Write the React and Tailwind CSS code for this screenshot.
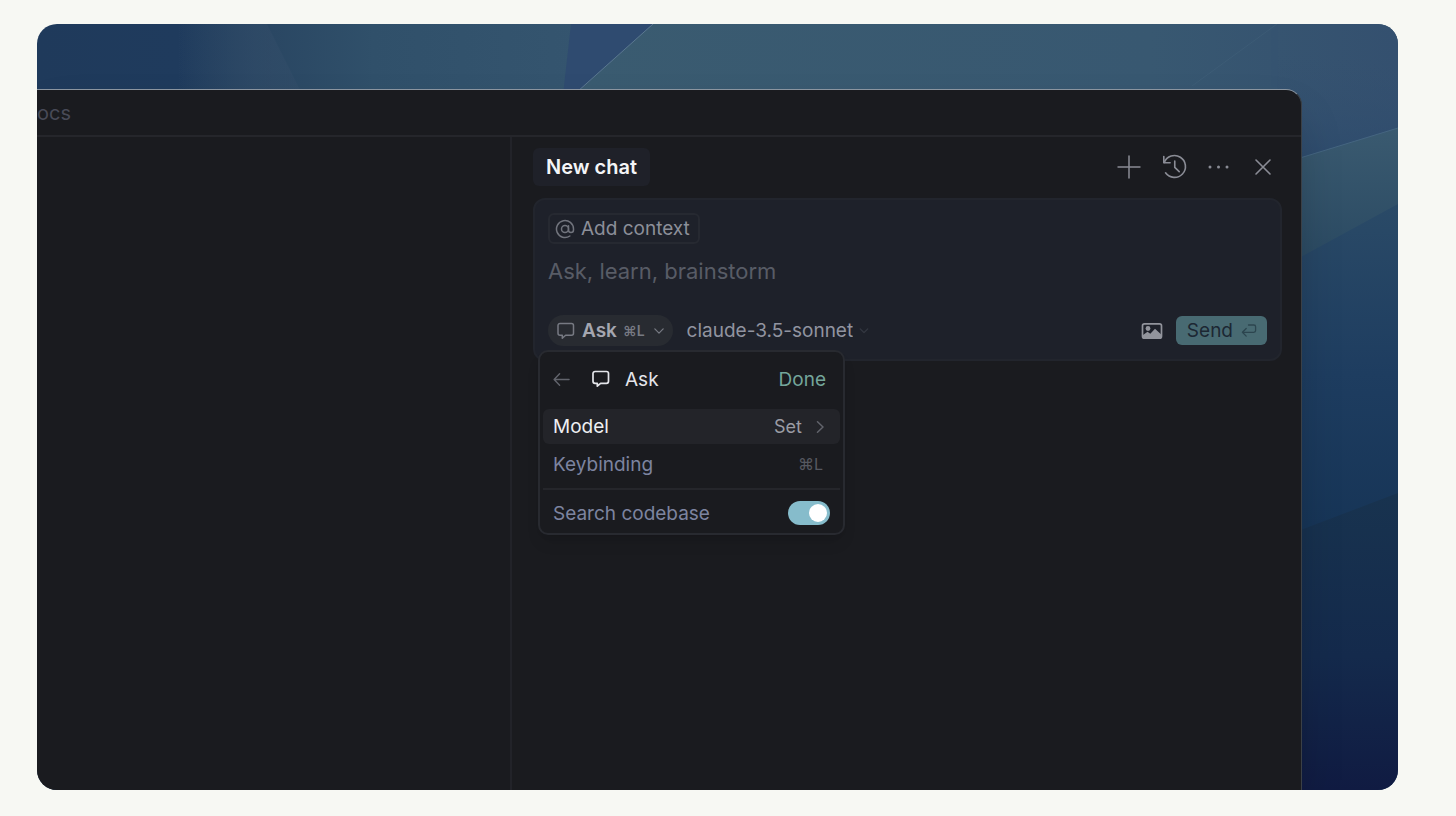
import React, { useState } from "react";

function Wallpaper() {
  return (
    <svg
      className="absolute inset-0 h-full w-full"
      viewBox="0 0 1361 766"
      preserveAspectRatio="none"
      aria-hidden="true"
    >
      <defs>
        <linearGradient id="sky" gradientUnits="userSpaceOnUse" x1="0" y1="0" x2="560" y2="0">
          <stop offset="0" stopColor="#1f3a5b" />
          <stop offset="0.25" stopColor="#1f3b5d" />
          <stop offset="0.42" stopColor="#2a4763" />
          <stop offset="0.6" stopColor="#30506a" />
          <stop offset="1" stopColor="#35556f" />
        </linearGradient>
        <linearGradient id="beam" gradientUnits="userSpaceOnUse" x1="140" y1="0" x2="250" y2="0">
          <stop offset="0" stopColor="#344e6a" stopOpacity="0" />
          <stop offset="0.7" stopColor="#344e6a" stopOpacity="0.45" />
          <stop offset="1" stopColor="#344e6a" stopOpacity="0.45" />
        </linearGradient>
        <linearGradient id="ridge" x1="0" y1="0" x2="1" y2="0">
          <stop offset="0" stopColor="#3a5b70" />
          <stop offset="0.7" stopColor="#385871" />
          <stop offset="1" stopColor="#34506f" />
        </linearGradient>
        <linearGradient id="dusk" x1="0" y1="0" x2="0" y2="1">
          <stop offset="0" stopColor="#34506f" stopOpacity="0" />
          <stop offset="1" stopColor="#2c4a6c" />
        </linearGradient>
        <linearGradient id="teal" x1="0" y1="0" x2="0" y2="1">
          <stop offset="0" stopColor="#3a5a70" />
          <stop offset="1" stopColor="#27465f" />
        </linearGradient>
        <linearGradient id="blue" x1="0" y1="0" x2="0" y2="1">
          <stop offset="0" stopColor="#2a4a67" />
          <stop offset="0.5" stopColor="#1e3d60" />
          <stop offset="1" stopColor="#163456" />
        </linearGradient>
        <linearGradient id="night" x1="0" y1="0" x2="0" y2="1">
          <stop offset="0" stopColor="#18334f" />
          <stop offset="0.55" stopColor="#142a4c" />
          <stop offset="1" stopColor="#101b42" />
        </linearGradient>
      </defs>
      <rect width="1361" height="766" fill="url(#sky)" />
      <path d="M140 0V80H270L230 0Z" fill="url(#beam)" />
      <path d="M534 0L525 80H540L616 0Z" fill="#2f4b70" />
      <path d="M616 0L536 72V150H1361V0Z" fill="url(#ridge)" />
      <path d="M616 0L540 68" stroke="#5b7890" strokeWidth="1" />
      <path d="M1155 62L1240 0" stroke="#46657e" strokeWidth="1" opacity="0.4" />
      <path d="M1240 30H1361V150H1240Z" fill="url(#dusk)" />
      <path d="M1240 141L1361 104V240L1240 270Z" fill="url(#teal)" />
      <path d="M1240 141L1361 104" stroke="#456580" strokeWidth="1" />
      <path d="M1240 246L1361 180V500L1240 520Z" fill="url(#blue)" />
      <path d="M1240 515L1361 469V766H1240Z" fill="url(#night)" />
    </svg>
  );
}

function Icon({ className, children, viewBox = "0 0 24 24", strokeWidth = 1.5 }) {
  return (
    <svg
      className={className}
      viewBox={viewBox}
      fill="none"
      stroke="currentColor"
      strokeWidth={strokeWidth}
      strokeLinecap="round"
      strokeLinejoin="round"
      aria-hidden="true"
    >
      {children}
    </svg>
  );
}

function ChatIcon({ className, strokeWidth }) {
  return (
    <Icon className={className} viewBox="0 0 20 20" strokeWidth={strokeWidth}>
      <path d="M4 2.500h11.500a2 2 0 0 1 2 2v7.800a2 2 0 0 1-2 2H9.600L6.300 17.200V14.300H4a2 2 0 0 1-2-2V4.500a2 2 0 0 1 2-2Z" />
    </Icon>
  );
}

function PanelHeader() {
  return (
    <header className="flex items-center justify-between pr-[5px]">
      <button className="rounded-md bg-[#1f2129] px-[13px] py-1 text-xl leading-[30px] font-semibold text-[#f4f5f7]">
        New chat
      </button>
      <div className="flex items-center gap-[18px] text-[#8a8c95]">
        <button aria-label="New chat">
          <Icon className="size-7">
            <path d="M12 2.600v18.800M2.600 12h18.800" strokeWidth="1.300" />
          </Icon>
        </button>
        <button aria-label="History">
          <Icon className="size-7" strokeWidth={1.4}>
            <path d="M2.400 3V8.400H7.800" />
            <path d="M2.800 8.100A9.400 9.400 0 1 1 3.900 17" />
            <path d="M11.800 7v5.400l3.800 3.600" />
          </Icon>
        </button>
        <button aria-label="More">
          <Icon className="size-6">
            <g fill="currentColor" stroke="none">
              <circle cx="3" cy="12" r="1.500" />
              <circle cx="11.500" cy="12" r="1.500" />
              <circle cx="20" cy="12" r="1.500" />
            </g>
          </Icon>
        </button>
        <button aria-label="Close">
          <Icon className="size-7" strokeWidth={1.4}>
            <path d="M6 6l12 12M18 6L6 18" />
          </Icon>
        </button>
      </div>
    </header>
  );
}

function ModeMenu() {
  const [search, setSearch] = useState(true);

  return (
    <div className="absolute top-full -left-[10px] z-10 mt-1 w-[307px] rounded-[10px] border-2 border-[#282a30] bg-[#1a1b1f] px-[3px] pt-[3px] text-[19px] leading-[29px] shadow-lg">
      <div className="flex h-12 items-center pr-[14px] pl-[10px] text-[#e4e5ea]">
        <button aria-label="Back" className="mr-[21px] text-[#62646c]">
          <Icon className="size-[17px]" viewBox="0 0 18 18">
            <path d="M17 9H1.500M7 3L1.200 9l5.800 6" />
          </Icon>
        </button>
        <ChatIcon className="mr-[14px] size-5" strokeWidth={1.700} />
        <span>Ask</span>
        <button className="ml-auto text-[#74a69b]">Done</button>
      </div>
      <button className="mt-[6px] flex h-[35px] w-full items-center rounded-md bg-[#232429] pr-[14px] pl-[10px] text-[#eeeff2]">
        <span>Model</span>
        <span className="ml-auto text-lg text-[#9b9ca4]">Set</span>
        <Icon className="ml-3 size-3 text-[#62646c]" viewBox="0 0 12 12">
          <path d="M3.500 0.800L9 6l-5.500 5.200" />
        </Icon>
      </button>
      <button className="flex h-10 w-full items-center justify-between pr-[17px] pl-[10px] text-[#7d84a0]">
        <span>Keybinding</span>
        <kbd className="font-['Inter',sans-serif] text-base text-[#565860]">⌘L</kbd>
      </button>
      <label className="mt-1 flex h-[45px] items-center justify-between border-t-2 border-[#25262b] px-[10px] pt-[3px] text-[#7d84a0]">
        <span>Search codebase</span>
        <input
          type="checkbox"
          role="switch"
          checked={search}
          onChange={(e) => setSearch(e.target.checked)}
          className="h-6 w-[42px] appearance-none rounded-full bg-[#3a3c44] before:m-[3px] before:block before:size-[18px] before:rounded-full before:bg-white checked:bg-[#86bccb] checked:before:ml-[21px]"
        />
      </label>
    </div>
  );
}

function Composer() {
  const [open, setOpen] = useState(true);

  return (
    <form
      className="mt-3 rounded-xl border-2 border-[#22252d] bg-[#1e212a] p-[13px]"
      onSubmit={(e) => e.preventDefault()}
    >
      <button
        type="button"
        className="flex h-[31px] items-center gap-[6px] rounded-md border-2 border-[#262931] pr-2 pl-[5px] text-[19px] leading-[29px] text-[#8c8f99]"
      >
        <Icon className="size-5 text-[#71747d]" strokeWidth={1.8}>
          <circle cx="12" cy="12" r="4.200" />
          <path d="M16.200 8v5.300a3 3 0 0 0 6 0V12a10.200 10.200 0 1 0-4.400 8.400" />
        </Icon>
        Add context
      </button>
      <input
        aria-label="Message"
        placeholder="Ask, learn, brainstorm"
        className="mt-3 block h-[30px] w-full bg-transparent text-[22px] outline-none placeholder:text-[#585c66]"
      />
      <div className="mt-[29px] flex h-[31px] items-center text-[19px] leading-[29px]">
        <div className="relative">
          <button
            type="button"
            aria-expanded={open}
            onClick={() => setOpen(!open)}
            className="flex h-[31px] items-center rounded-full bg-[#282b31] pr-[9px] pl-2 text-[#a4a6b0]"
          >
            <ChatIcon className="size-5 text-[#777a83]" strokeWidth={1.500} />
            <span className="ml-[6px] font-semibold">Ask</span>
            <kbd className="ml-[6px] font-['Inter',sans-serif] text-sm font-semibold text-[#777a83]">⌘L</kbd>
            <Icon className="ml-[9px] size-[10px] text-[#777a83]" viewBox="0 0 12 12">
              <path d="M1 3.500L6 8.500l5-5" />
            </Icon>
          </button>
          {open && <ModeMenu />}
        </div>
        <label className="ml-[14px] flex items-center text-[#9194a0]">
          <select aria-label="Model" className="appearance-none bg-transparent outline-none [field-sizing:content]">
            <option>claude-3.5-sonnet</option>
          </select>
          <Icon className="ml-[6px] size-[10px] text-[#343842]" viewBox="0 0 12 12">
            <path d="M1.500 3.500L6 8l4.500-4.500" />
          </Icon>
        </label>
        <button type="button" aria-label="Attach image" className="ml-auto text-[#92949c]">
          <svg className="size-[22px]" viewBox="0 0 22 22" fill="none" aria-hidden="true">
            <rect x="1.500" y="3.800" width="19" height="14.400" rx="2" stroke="currentColor" strokeWidth="1.700" />
            <circle cx="7" cy="8.500" r="2.400" fill="currentColor" />
            <path d="M2 15l4.500-3.200 2.800 2 4.700-5 6.500 6V18H2Z" fill="currentColor" />
          </svg>
        </button>
        <button className="ml-[13px] flex h-[29px] items-center gap-2 rounded-md bg-[#486a72] pr-[10px] pl-[11px] text-[#1c2733]">
          Send
          <Icon className="size-4 text-[#2c454f]" viewBox="0 0 16 16" strokeWidth={1.3}>
            <path d="M7.500 2H12.800A1.800 1.800 0 0 1 14.600 3.800V7.500A1.800 1.800 0 0 1 12.800 9.300H1.500M5.200 5.500L1.400 9.300l3.800 3.800" />
          </Icon>
        </button>
      </div>
    </form>
  );
}

export default function App() {
  return (
    <main className="flex h-screen bg-[#f7f8f3] pt-6 pr-[58px] pb-[26px] pl-[37px] font-['Inter',sans-serif]">
      <div className="relative flex flex-1 overflow-hidden rounded-[20px]">
        <Wallpaper />
        <div className="relative mt-[65px] mr-24 flex flex-1 flex-col overflow-hidden rounded-tr-2xl border-t border-r border-t-[#8b95a0] border-r-[#3b4046] bg-[#1a1b1f] shadow-2xl">
          <div className="flex h-[47px] items-center border-b-2 border-[#25262b] text-xl text-[#484a57]">
            ocs
          </div>
          <div className="flex flex-1">
            <div className="flex-[3]" />
            <section className="w-[791px] border-l-2 border-[#222329] pt-[11px] pr-[19px] pl-[21px]">
              <PanelHeader />
              <Composer />
            </section>
          </div>
        </div>
      </div>
    </main>
  );
}
